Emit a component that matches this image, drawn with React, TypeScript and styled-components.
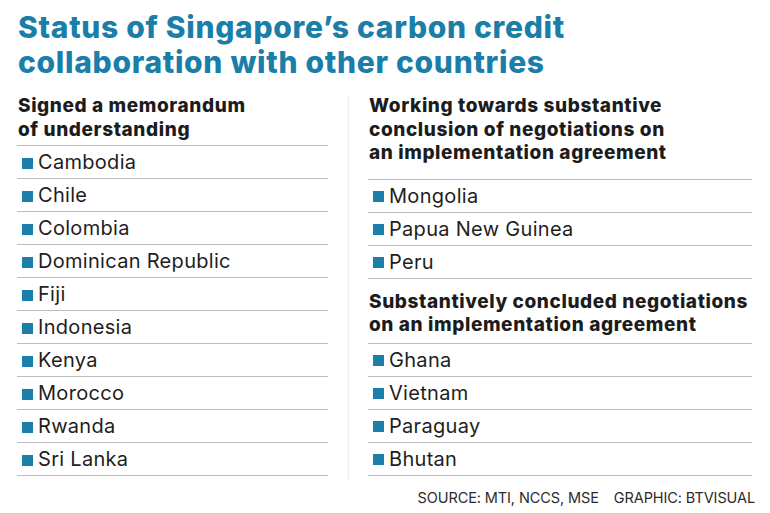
import React from "react";
import styled, { createGlobalStyle } from "styled-components";

const Global = createGlobalStyle`
  html, body { margin: 0; padding: 0; background: #fff; }
  body { font-family: Inter, Roboto, "Liberation Sans", sans-serif; }
`;

const Page = styled.div`
  width: 770px;
  height: 513px;
  box-sizing: border-box;
  padding: 10px 0 0 18px;
  background: #fff;
  overflow: hidden;
`;

const Title = styled.h1`
  margin: 0;
  font-size: 30px;
  line-height: 35px;
  font-weight: 800;
  color: #1a7ea9;
  letter-spacing: 0.7px;
  white-space: nowrap;
`;

const Columns = styled.div`
  display: grid;
  grid-template-columns: 311px 40px 384px;
  margin-top: 14px;
  margin-left: -1px;
`;

const Column = styled.div`
  display: flex;
  flex-direction: column;
`;

const Divider = styled.div`
  justify-self: center;
  width: 3px;
  margin-top: 2px;
  height: 384px;
  background: linear-gradient(to right, #fcfcfc, #f3f3f3, #fcfcfc);
`;

const Heading = styled.h2<{ $gap: number; $top?: number }>`
  margin: ${(p) => p.$top ?? 0}px 0 ${(p) => p.$gap}px 1px;
  font-size: 19px;
  line-height: 23.5px;
  font-weight: 800;
  letter-spacing: 0.6px;
  color: #1c1c1c;
  white-space: nowrap;
`;

const List = styled.ul`
  margin: 0;
  padding: 0;
  list-style: none;
  border-bottom: 1.5px solid #bdbdbd;
`;

const Item = styled.li`
  display: flex;
  align-items: center;
  height: 33px;
  box-sizing: border-box;
  border-top: 1.5px solid #bdbdbd;
  padding-left: 5px;
  font-size: 20px;
  letter-spacing: 0.3px;
  color: #1e1e1e;
  gap: 5px;
`;

const Square = styled.span`
  width: 11px;
  height: 11px;
  background: #1a7fa9;
  flex: none;
  margin-top: 2px;
`;

const Footer = styled.div`
  display: flex;
  justify-content: flex-end;
  gap: 15px;
  width: 737px;
  margin-top: 9px;
  font-size: 14.5px;
  letter-spacing: -0.1px;
  color: #2b2b2b;
`;

const mou = [
  "Cambodia",
  "Chile",
  "Colombia",
  "Dominican Republic",
  "Fiji",
  "Indonesia",
  "Kenya",
  "Morocco",
  "Rwanda",
  "Sri Lanka",
];
const working = ["Mongolia", "Papua New Guinea", "Peru"];
const concluded = ["Ghana", "Vietnam", "Paraguay", "Bhutan"];

const Countries = ({ items }: { items: string[] }) => (
  <List>
    {items.map((c) => (
      <Item key={c}>
        <Square />
        {c}
      </Item>
    ))}
  </List>
);

export default function App() {
  return (
    <Page>
      <Global />
      <Title>
        Status of Singapore’s carbon credit
        <br />
        collaboration with other countries
      </Title>
      <Columns>
        <Column>
          <Heading $gap={4}>
            Signed a memorandum
            <br />
            of understanding
          </Heading>
          <Countries items={mou} />
        </Column>
        <Divider />
        <Column>
          <Heading $gap={14}>
            Working towards substantive
            <br />
            conclusion of negotiations on
            <br />
            an implementation agreement
          </Heading>
          <Countries items={working} />
          <Heading $gap={6} $top={11}>
            Substantively concluded negotiations
            <br />
            on an implementation agreement
          </Heading>
          <Countries items={concluded} />
        </Column>
      </Columns>
      <Footer>
        <span>SOURCE: MTI, NCCS, MSE</span>
        <span>GRAPHIC: BTVISUAL</span>
      </Footer>
    </Page>
  );
}
